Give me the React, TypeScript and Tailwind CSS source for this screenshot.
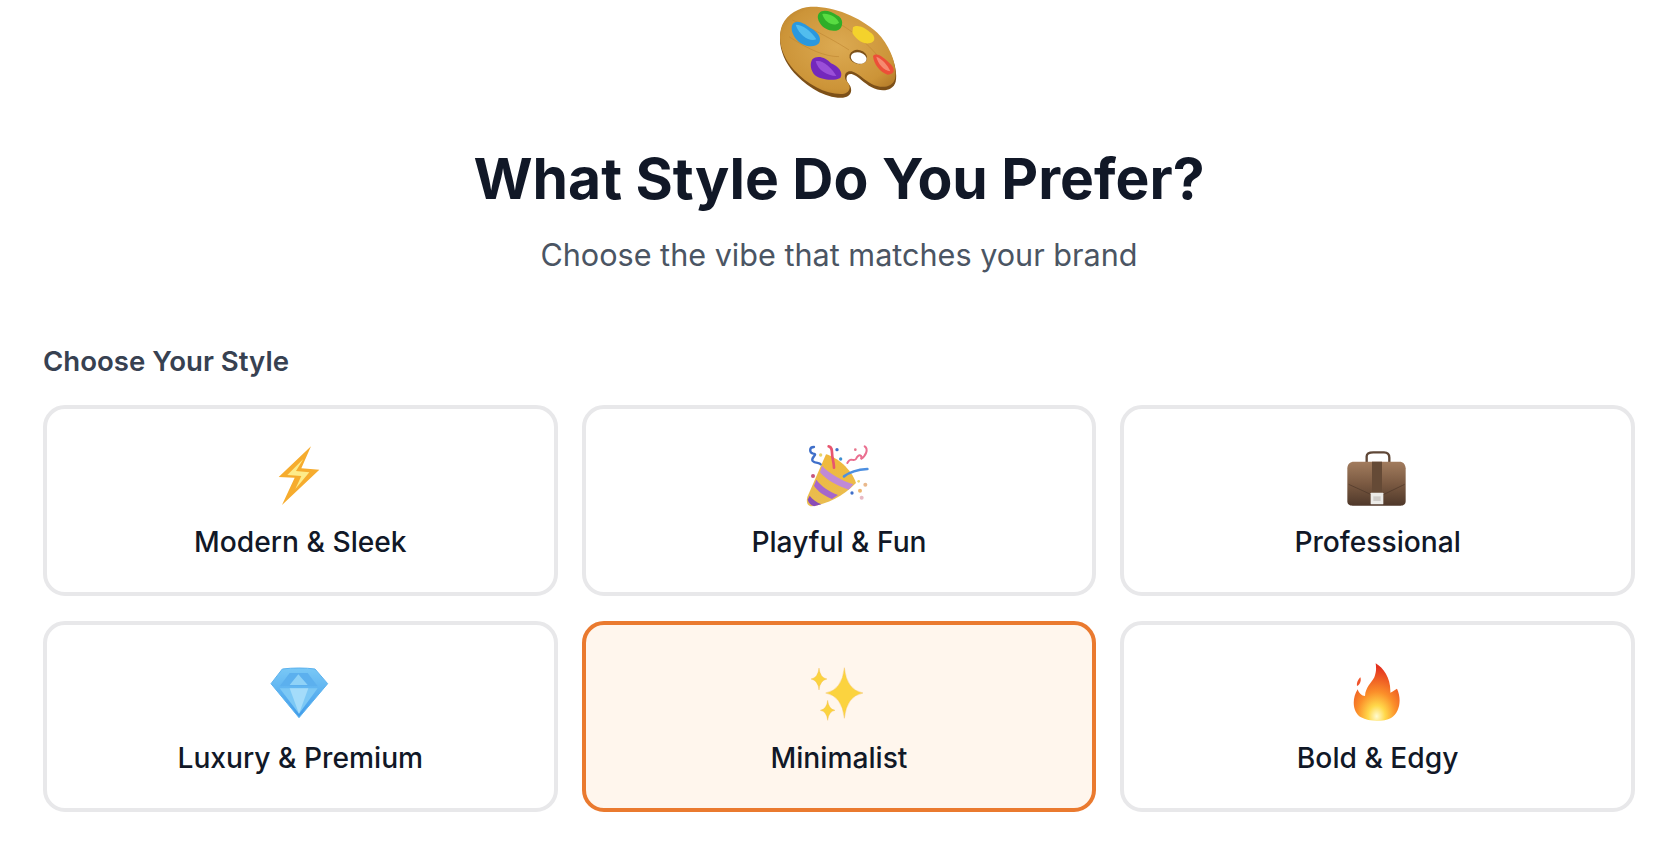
const BLUR = 'blur(0.4px)';

function Palette() {
  return (
    <svg viewBox="0 0 600 330" className="block w-[200px] h-[110px] mx-auto">
      <defs>
        <radialGradient id="wood" cx="0.5" cy="0.45" r="0.7">
          <stop offset="0" stopColor="#dcaa52" />
          <stop offset="0.7" stopColor="#cc9438" />
          <stop offset="1" stopColor="#ad7424" />
        </radialGradient>
      </defs>
      <g style={{ filter: BLUR }}>
        <path d="M215 26 C280 22 360 55 415 105 C455 145 478 205 470 245 C462 275 425 276 398 262 C375 250 358 228 338 222 C322 220 318 238 328 250 C342 266 340 290 312 293 C262 296 205 262 165 218 C130 178 112 125 130 78 C145 45 180 28 215 26 Z" fill="#7d5018" />
        <path d="M215 20 C280 18 360 48 415 98 C455 138 476 200 468 236 C460 264 425 266 398 252 C375 240 358 220 338 214 C320 210 312 228 322 242 C338 258 335 280 310 282 C262 284 205 254 165 210 C130 170 112 120 130 74 C145 42 180 22 215 20 Z" fill="url(#wood)" />
        <path d="M160 60 C230 90 300 130 330 150 M150 110 C210 150 260 170 300 170 M300 70 C350 100 400 140 440 200" fill="none" stroke="#b97f2b" strokeWidth="3" opacity="0.5" />
        <ellipse cx="358" cy="171" rx="27" ry="21" transform="rotate(14 358 171)" fill="#7d5119" />
        <ellipse cx="359" cy="174" rx="24" ry="17" transform="rotate(14 359 174)" fill="#ffffff" />
        <path d="M240 40 C252 26 276 34 294 46 C314 54 314 82 298 90 C278 98 252 86 243 70 C236 58 234 48 240 40 Z" fill="#2fae28" />
        <path d="M250 42 C268 38 292 50 300 68 C288 80 258 72 250 42 Z" fill="#58dc42" />
        <path d="M160 74 C172 56 196 70 214 84 C234 94 250 112 240 130 C224 146 192 138 176 122 C162 108 154 88 160 74 Z" fill="#2a98de" />
        <path d="M170 74 C190 74 216 92 232 118 C212 126 182 108 170 74 Z" fill="#52bdee" />
        <path d="M342 82 C356 72 378 84 392 96 C412 108 410 128 390 130 C368 132 348 114 340 98 Z" fill="#f4d22c" />
        <path d="M220 178 C236 164 262 174 276 190 C298 198 314 218 304 234 C284 244 246 240 228 226 C214 212 212 190 220 178 Z" fill="#7428bc" />
        <path d="M230 184 C250 178 278 204 292 228 C264 228 236 210 230 184 Z" fill="#9a4fd8" />
        <path d="M402 168 C414 154 436 174 452 190 C470 206 468 224 446 224 C424 218 404 192 402 168 Z" fill="#ec4f38" />
        <path d="M412 170 C426 174 446 194 454 214 C434 212 416 190 412 170 Z" fill="#f68a70" />
      </g>
    </svg>
  );
}

function Bolt() {
  return (
    <g transform="translate(58 30)">
      <path d="M155 28 L58 120 L106 122 L68 204 L180 98 L126 94 Z" fill="#f6ac2e" />
      <path d="M132 66 L84 114 L126 117 L108 156 L150 106 L110 102 Z" fill="#fdeb8a" />
    </g>
  );
}

function Party() {
  return (
    <g transform="translate(-27 0)">
      <defs>
        <linearGradient id="cone" x1="0" y1="0" x2="0" y2="1">
          <stop offset="0" stopColor="#f0b93a" />
          <stop offset="1" stopColor="#e9bd52" />
        </linearGradient>
      </defs>
      <path d="M168 82 C200 90 244 126 258 168 C222 206 170 232 126 238 C112 238 108 226 112 210 Z" fill="url(#cone)" />
      <path d="M156 116 C178 140 214 160 250 172 L236 188 C200 176 168 158 150 136 Z" fill="#c08ad6" />
      <path d="M139 158 C154 178 178 194 204 204 L186 216 C162 206 142 192 132 176 Z" fill="#a567cc" />
      <path d="M119 206 C128 218 140 226 154 232 L132 238 C122 234 116 228 113 218 Z" fill="#8a4cb8" />
      <path d="M132 60 C116 60 118 78 130 80 C146 82 120 92 128 102 C136 110 148 106 152 112" fill="none" stroke="#3f6fc9" strokeWidth="7" strokeLinecap="round" />
      <path d="M176 58 C190 60 184 80 188 94 C190 104 192 112 192 122" fill="none" stroke="#e8556f" strokeWidth="8" strokeLinecap="round" />
      <path d="M232 108 C242 88 250 106 258 96 C266 76 280 88 272 96 C288 88 296 66 284 58" fill="none" stroke="#ea6f90" strokeWidth="6" strokeLinecap="round" />
      <path d="M222 148 C240 134 262 128 292 126" fill="none" stroke="#4d8fe0" strokeWidth="8" strokeLinecap="round" />
      <circle cx="201" cy="68" r="5" fill="#3f6fc9" />
      <circle cx="152" cy="84" r="5" fill="#e9d268" />
      <circle cx="212" cy="96" r="5" fill="#3f8fd0" />
      <circle cx="129" cy="147" r="6" fill="#c7567c" />
      <circle cx="256" cy="68" r="4" fill="#e8758c" />
      <circle cx="246" cy="198" r="5" fill="#3f6fc9" />
      <circle cx="286" cy="173" r="6" fill="#e9b98c" />
      <circle cx="270" cy="191" r="6" fill="#eeb66e" />
      <circle cx="275" cy="212" r="6" fill="#e7b9c4" />
      <circle cx="266" cy="163" r="4" fill="#ecd56e" />
    </g>
  );
}

function Briefcase() {
  return (
    <g transform="translate(8 4)">
      <defs>
        <linearGradient id="leather" x1="0" y1="0" x2="0" y2="1">
          <stop offset="0" stopColor="#a27c5e" />
          <stop offset="0.5" stopColor="#7b5a42" />
          <stop offset="1" stopColor="#4f382a" />
        </linearGradient>
      </defs>
      <path d="M138 102 L138 84 C138 74 146 72 158 72 L190 72 C202 72 206 78 206 88 L206 102" fill="none" stroke="#5f4737" strokeWidth="7" />
      <path d="M100 100 L236 100 C248 100 254 108 255 120 L255 218 C255 228 248 232 240 232 L96 232 C86 232 80 228 80 218 L80 120 C80 108 88 100 100 100 Z" fill="url(#leather)" />
      <path d="M84 168 L150 198 L190 198 L252 168" fill="none" stroke="#4e3829" strokeWidth="3" opacity="0.7" />
      <rect x="154" y="100" width="30" height="96" fill="#654a36" />
      <rect x="150" y="193" width="38" height="35" rx="2" fill="#ecebe8" />
      <rect x="158" y="204" width="22" height="14" fill="#cfccc8" />
    </g>
  );
}

function Diamond() {
  return (
    <g transform="translate(27 18)">
      <defs>
        <linearGradient id="gem" x1="0" y1="0" x2="0" y2="1">
          <stop offset="0" stopColor="#79c8f6" />
          <stop offset="1" stopColor="#3f9bea" />
        </linearGradient>
      </defs>
      <path d="M100 60 C130 56 170 56 198 60 L236 104 L150 206 L66 104 Z" fill="url(#gem)" stroke="#5cb2ee" strokeWidth="3" strokeLinejoin="round" />
      <path d="M122 72 L176 72 L206 112 L92 112 Z" fill="#5cb0ee" />
      <path d="M148 76 L176 108 L122 108 Z" fill="#8fd2f7" />
      <path d="M92 118 L206 118 L150 194 Z" fill="#7cc8f5" />
      <path d="M122 118 L178 118 L150 194 Z" fill="#a4dcfa" />
    </g>
  );
}

function Star({ cx, cy, rx, ry }: { cx: number; cy: number; rx: number; ry: number }) {
  const k = 0.12;
  return (
    <path
      d={`M${cx} ${cy - ry} Q${cx + rx * k} ${cy - ry * k} ${cx + rx} ${cy} Q${cx + rx * k} ${cy + ry * k} ${cx} ${cy + ry} Q${cx - rx * k} ${cy + ry * k} ${cx - rx} ${cy} Q${cx - rx * k} ${cy - ry * k} ${cx} ${cy - ry} Z`}
      fill="#fbd33f"
      stroke="#f0b64a"
      strokeWidth="1"
    />
  );
}

function Sparkles() {
  return (
    <g>
      <Star cx={196} cy={150} rx={56} ry={76} />
      <Star cx={120} cy={108} rx={24} ry={33} />
      <Star cx={146} cy={202} rx={22} ry={30} />
    </g>
  );
}

function Fire() {
  return (
    <g transform="translate(37 17)">
      <defs>
        <radialGradient id="flame" cx="0.5" cy="0.92" r="0.85">
          <stop offset="0" stopColor="#fffbd0" />
          <stop offset="0.22" stopColor="#ffd84a" />
          <stop offset="0.5" stopColor="#fb8f2a" />
          <stop offset="1" stopColor="#e4321e" />
        </radialGradient>
      </defs>
      <path d="M136 44 C160 58 182 90 180 132 C188 128 196 122 200 120 C214 150 210 190 182 208 C160 220 116 220 92 206 C66 190 64 150 82 122 C86 134 94 142 104 142 C106 116 122 104 132 86 C138 70 138 58 136 44 Z" fill="url(#flame)" />
      <path d="M90 86 C94 96 88 110 80 112 C78 102 84 92 90 86 Z" fill="#f0532a" />
    </g>
  );
}

const rows = [
  { label: 'Modern & Sleek', art: <Bolt /> },
  { label: 'Playful & Fun', art: <Party /> },
  { label: 'Professional', art: <Briefcase /> },
  { label: 'Luxury & Premium', art: <Diamond /> },
  { label: 'Minimalist', art: <Sparkles />, selected: true },
  { label: 'Bold & Edgy', art: <Fire /> },
];

function StyleCard({ label, art, selected }: { label: string; art: React.ReactNode; selected?: boolean }) {
  return (
    <div
      className={`h-[191px] rounded-[22px] border-[4px] flex flex-col items-center pt-[18px] ${
        selected ? 'border-[#ea7a2f] bg-[#fff6ed]' : 'border-[#e8e8ea] bg-white'
      }`}
    >
      <svg viewBox="0 0 360 270" className="block w-[120px] h-[90px]" style={{ filter: BLUR }}>
        {art}
      </svg>
      <div className="mt-[7px] text-[28.2px] leading-[36px] font-medium text-[#111827]">{label}</div>
    </div>
  );
}

export default function App() {
  return (
    <div className="min-h-[848px] bg-white overflow-hidden pl-[43px] pr-[39px] font-['Inter',sans-serif]">
      <Palette />
      <h1 className="mt-[31px] text-center text-[57px] leading-[76px] font-bold text-[#111827]">What Style Do You Prefer?</h1>
      <p className="mt-[14px] text-center text-[30.6px] leading-[48px] text-[#4b5563]">Choose the vibe that matches your brand</p>
      <div className="mt-[64px] text-[27.6px] leading-[36px] font-semibold text-[#374151]">Choose Your Style</div>
      <div className="mt-[26px] grid grid-cols-3 gap-x-[24px] gap-y-[25px]">
        {rows.map((r) => (
          <StyleCard key={r.label} label={r.label} art={r.art} selected={r.selected} />
        ))}
      </div>
    </div>
  );
}
